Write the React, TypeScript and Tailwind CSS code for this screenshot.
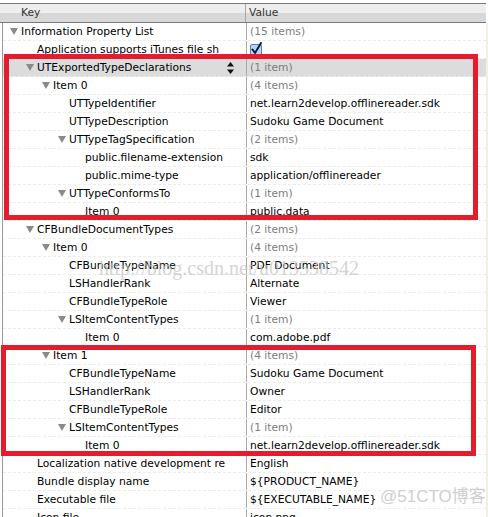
import React from "react";

type Row = { k: string; v: string; l: number; t?: boolean; g?: boolean; sel?: boolean; check?: boolean };

const rows: Row[] = [
  { k: "Information Property List", v: "(15 items)", l: 0, t: true, g: true },
  { k: "Application supports iTunes file sh", v: "", l: 1, check: true },
  { k: "UTExportedTypeDeclarations", v: "(1 item)", l: 1, t: true, g: true, sel: true },
  { k: "Item 0", v: "(4 items)", l: 2, t: true, g: true },
  { k: "UTTypeIdentifier", v: "net.learn2develop.offlinereader.sdk", l: 3 },
  { k: "UTTypeDescription", v: "Sudoku Game Document", l: 3 },
  { k: "UTTypeTagSpecification", v: "(2 items)", l: 3, t: true, g: true },
  { k: "public.filename-extension", v: "sdk", l: 4 },
  { k: "public.mime-type", v: "application/offlinereader", l: 4 },
  { k: "UTTypeConformsTo", v: "(1 item)", l: 3, t: true, g: true },
  { k: "Item 0", v: "public.data", l: 4 },
  { k: "CFBundleDocumentTypes", v: "(2 items)", l: 1, t: true, g: true },
  { k: "Item 0", v: "(4 items)", l: 2, t: true, g: true },
  { k: "CFBundleTypeName", v: "PDF Document", l: 3 },
  { k: "LSHandlerRank", v: "Alternate", l: 3 },
  { k: "CFBundleTypeRole", v: "Viewer", l: 3 },
  { k: "LSItemContentTypes", v: "(1 item)", l: 3, t: true, g: true },
  { k: "Item 0", v: "com.adobe.pdf", l: 4 },
  { k: "Item 1", v: "(4 items)", l: 2, t: true, g: true },
  { k: "CFBundleTypeName", v: "Sudoku Game Document", l: 3 },
  { k: "LSHandlerRank", v: "Owner", l: 3 },
  { k: "CFBundleTypeRole", v: "Editor", l: 3 },
  { k: "LSItemContentTypes", v: "(1 item)", l: 3, t: true, g: true },
  { k: "Item 0", v: "net.learn2develop.offlinereader.sdk", l: 4 },
  { k: "Localization native development re", v: "English", l: 1 },
  { k: "Bundle display name", v: "${PRODUCT_NAME}", l: 1 },
  { k: "Executable file", v: "${EXECUTABLE_NAME}", l: 1 },
  { k: "Icon file", v: "icon.png", l: 1 },
];

const indent = ["pl-[7px]", "pl-[23px]", "pl-[39px]", "pl-[55px]", "pl-[71px]"];

function Tri() {
  return (
    <svg width="8" height="7" viewBox="0 0 8 7" className="mr-[3px] shrink-0">
      <polygon points="0,0 8,0 4,7" fill="#8a8a8a" />
    </svg>
  );
}

function Check() {
  return (
    <svg width="14" height="14" viewBox="0 0 14 14" className="mt-[-1px]">
      <rect x="0.5" y="2.5" width="11" height="11" rx="1.5" fill="#b9d3f5" stroke="#5b7fb5" />
      <path d="M2.5 7.5 L5 11 L11 1" stroke="#0d1a3a" strokeWidth="2" fill="none" strokeLinecap="round" strokeLinejoin="round" />
    </svg>
  );
}

function Stepper() {
  return (
    <svg width="7" height="12" viewBox="0 0 7 12" className="absolute right-[12px] top-[3px]">
      <polygon points="3.5,0 7,4.5 0,4.5" fill="#111" />
      <polygon points="0,7.5 7,7.5 3.5,12" fill="#111" />
    </svg>
  );
}

export default function App() {
  return (
    <div
      className="relative w-[488px] h-[517px] overflow-hidden bg-white text-[10.7px] text-black"
      style={{ fontFamily: '"DejaVu Sans", "Noto Sans", sans-serif' }}
    >
      <div className="h-[3px] bg-white" />
      {/* header */}
      <div className="flex h-[20px] border-y border-[#7a7a7a] w-[486px]">
        <div className="w-[246px] flex flex-col border-r border-[#a8a8a8] relative">
          <div className="h-[9px] bg-[#eeeeee]" />
          <div className="flex-1 bg-[#d8d8d8]" />
          <span className="absolute left-[21px] top-0 leading-[18px] text-[#333]">Key</span>
        </div>
        <div className="flex-1 flex flex-col relative">
          <div className="h-[9px] bg-[#eeeeee]" />
          <div className="flex-1 bg-[#d8d8d8]" />
          <span className="absolute left-[3px] top-0 leading-[18px] text-[#333]">Value</span>
        </div>
      </div>
      {/* body */}
      <div className="flex w-[488px]">
        <div className="w-[486px] ml-[2px] border-l border-[#9a9a9a] flex flex-col">
          {rows.map((r, i) => (
            <div
              key={i}
              className={
                "flex h-[18px] border-b border-dashed border-[#ececec] " + (r.sel ? "bg-[#dcdcdc]" : "bg-white")
              }
            >
              <div className={"relative w-[243px] flex items-center whitespace-nowrap overflow-hidden " + indent[r.l]}>
                {r.t ? <Tri /> : <span className="w-[11px] shrink-0" />}
                <span className="leading-[17px]">{r.k}</span>
                {r.sel && <Stepper />}
              </div>
              <div className="w-[1px] bg-[#a8a8a8]" />
              <div
                className={
                  "flex-1 pl-[3px] flex items-center whitespace-nowrap leading-[17px] " +
                  (r.g ? "text-[#7d7d7d]" : "text-black")
                }
              >
                {r.check ? <Check /> : r.v}
              </div>
            </div>
          ))}
        </div>
        <div className="w-[2px] bg-[#f3efe2]" />
      </div>

      {/* annotation boxes */}
      <div className="absolute left-[4px] top-[54px] w-[474px] h-[166px] border-[5px] border-[#e51c2d]" />
      <div className="absolute left-[1px] top-[345px] w-[475px] h-[111px] border-[5px] border-[#e51c2d]" />

      {/* watermarks */}
      <div
        className="absolute left-[99px] top-[256px] text-[20px] leading-[24px] text-[#c4c4c4] opacity-70 whitespace-nowrap"
        style={{ fontFamily: '"Liberation Serif", serif' }}
      >
        http://blog.csdn.net/u013538542
      </div>
      <div
        className="absolute left-[380px] top-[486px] text-[17px] leading-[22px] text-[#cfcfcf] whitespace-nowrap"
        style={{ fontFamily: '"Liberation Sans", "Noto Sans CJK SC", sans-serif' }}
      >
        @51CTO博客
      </div>
    </div>
  );
}
